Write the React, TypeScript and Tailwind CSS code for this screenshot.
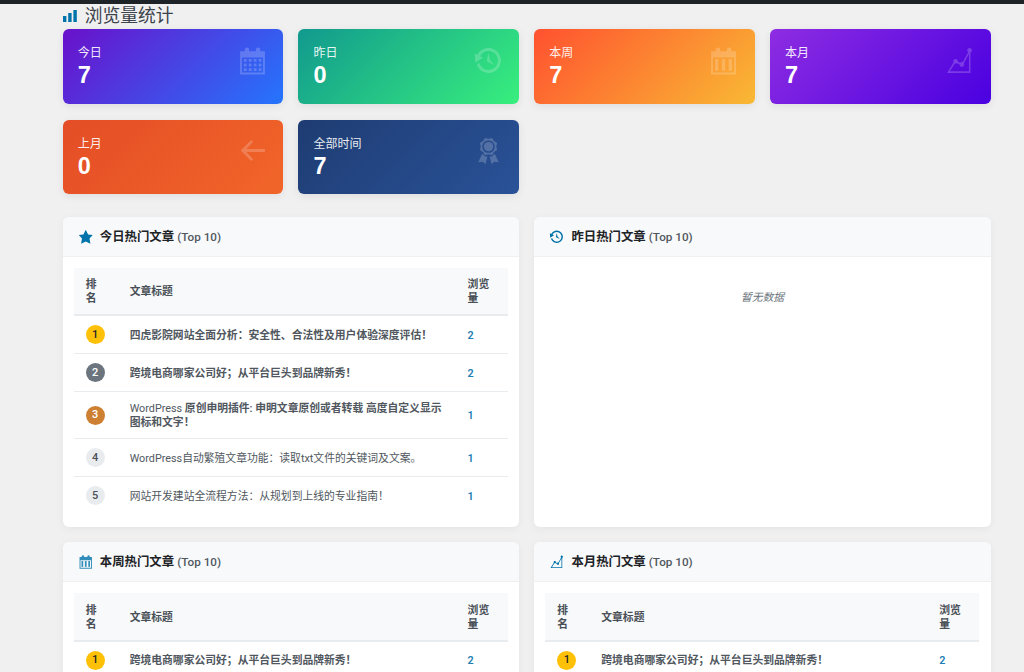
import React from "react";

type IconProps = { className?: string };

const CalFrame = () => (
  <>
    <path fillRule="evenodd" d="M2 4h16v15H2zM3.2 8v9.8h13.6V8z" />
    <rect x="5" y="1.6" width="2.8" height="4.6" rx="1.4" />
    <rect x="12.2" y="1.6" width="2.8" height="4.6" rx="1.4" />
  </>
);

const CalendarAlt = ({ className }: IconProps) => (
  <svg viewBox="0 0 20 20" fill="currentColor" className={className}>
    <CalFrame />
    {[4.4, 7.6, 10.8, 14].map((x) =>
      [9, 12, 15].map((y) => <rect key={`${x}-${y}`} x={x} y={y} width="1.8" height="1.8" />)
    )}
  </svg>
);

const CalendarBars = ({ className }: IconProps) => (
  <svg viewBox="0 0 20 20" fill="currentColor" className={className}>
    <CalFrame />
    <rect x="4.5" y="9" width="2.2" height="7.6" />
    <rect x="8.9" y="9" width="2.2" height="7.6" />
    <rect x="13.3" y="9" width="2.2" height="7.6" />
  </svg>
);

const Backup = ({ className }: IconProps) => (
  <svg viewBox="0 0 20 20" fill="currentColor" className={className}>
    <path d="M13.65 2.88c3.93 2.01 5.48 6.84 3.47 10.77s-6.83 5.48-10.77 3.47c-1.87-.96-3.2-2.56-3.86-4.4l1.64-1.03c.45 1.57 1.52 2.95 3.08 3.76 3.01 1.54 6.69.35 8.23-2.66 1.55-3.01.36-6.69-2.65-8.24C9.78 3.01 6.1 4.2 4.56 7.21l1.88.97-4.95 3.08-.39-5.82 1.78.91C4.9 2.4 9.75.89 13.65 2.88zm-4.36 7.83C9.11 10.53 9 10.28 9 10c0-.07.03-.12.04-.19h-.01L10 5l.97 4.81L14 13l-4.5-2.12.02-.02c-.08-.04-.16-.09-.23-.15z" />
  </svg>
);

const ChartLine = ({ className }: IconProps) => (
  <svg viewBox="0 0 20 20" fill="currentColor" className={className}>
    <path d="M18 3.5c0 .62-.38 1.16-.92 1.38v13.11H1.99l4.22-6.73c-.13-.23-.21-.48-.21-.76C6 9.67 6.67 9 7.5 9S9 9.67 9 10.5c0 .13-.02.25-.05.37l1.44.63c.27-.3.67-.5 1.11-.5.18 0 .35.04.51.09l3.58-6.41c-.36-.27-.59-.7-.59-1.18 0-.83.67-1.5 1.5-1.5.19 0 .36.04.53.1l.05-.09v.11c.54.22.92.76.92 1.38zm-1.92 13.49V5.85l-3.29 5.89c.13.23.21.48.21.76 0 .83-.67 1.5-1.5 1.5s-1.5-.67-1.5-1.5l.01-.07-1.63-.72c-.25.18-.55.29-.88.29-.18 0-.35-.04-.51-.1l-3.2 5.09h12.29z" />
  </svg>
);

const ArrowLeft = ({ className }: IconProps) => (
  <svg viewBox="0 0 20 20" fill="currentColor" className={className}>
    <path d="M18 9.1v1.8H6l4.4 4.7-1.2 1.2L2.4 10l6.8-6.8 1.2 1.2L6 9.1z" />
  </svg>
);

const Awards = ({ className }: IconProps) => (
  <svg viewBox="0 0 20 20" fill="currentColor" className={className}>
    <path d="M4.46 5.16L5 7.46l-.54 2.29 2.01 1.24L7.7 13l2.3-.54 2.3.54 1.23-2.01 2.01-1.24L15 7.46l.54-2.3-2-1.24-1.24-2.01-2.3.55-2.29-.54-1.25 2zm5.55 6.34c-2.21 0-4.01-1.79-4.01-4 0-2.22 1.8-4.01 4.01-4.01 2.22 0 4.01 1.79 4.01 4.01 0 2.21-1.79 4-4.01 4z" />
    <circle cx="10" cy="7.5" r="3" />
    <path d="M5.8 12.4L3.4 17.6l3-.4 1.6 1.6 1.3-5-1.6.1-1.2-1.5zM14.2 12.4l2.4 5.2-3-.4-1.6 1.6-1.3-5 1.6.1 1.2-1.5z" />
  </svg>
);

const Star = ({ className }: IconProps) => (
  <svg viewBox="0 0 20 20" fill="currentColor" className={className}>
    <path d="m10 1 3 6 6 .75-4.12 4.62L16 19l-6-3-6 3 1.13-6.63L1 7.75 7 7z" />
  </svg>
);

const ChartBar = ({ className }: IconProps) => (
  <svg viewBox="0 0 14 12" fill="currentColor" className={className}>
    <rect x="0" y="6" width="3.4" height="6" />
    <rect x="5.2" y="3" width="3.4" height="9" />
    <rect x="10.4" y="0" width="3.4" height="12" />
  </svg>
);

const stats = [
  { label: "今日", value: "7", grad: "bg-[linear-gradient(135deg,#6a11cb,#2575fc)]", Icon: CalendarAlt },
  { label: "昨日", value: "0", grad: "bg-[linear-gradient(135deg,#11998e,#38ef7d)]", Icon: Backup },
  { label: "本周", value: "7", grad: "bg-[linear-gradient(135deg,#ff512f,#f9b934)]", Icon: CalendarBars },
  { label: "本月", value: "7", grad: "bg-[linear-gradient(135deg,#8e2de2,#4a00e0)]", Icon: ChartLine },
  { label: "上月", value: "0", grad: "bg-[linear-gradient(135deg,#e44d26,#f16529)]", Icon: ArrowLeft },
  { label: "全部时间", value: "7", grad: "bg-[linear-gradient(135deg,#1e3c72,#2a5298)]", Icon: Awards },
];

type Row = { title: React.ReactNode; key: string; views: string };

const todayRows: Row[] = [
  { key: "a", title: "四虎影院网站全面分析：安全性、合法性及用户体验深度评估！", views: "2" },
  { key: "b", title: "跨境电商哪家公司好；从平台巨头到品牌新秀！", views: "2" },
  {
    key: "c",
    title: (
      <>
        <span className="font-normal">WordPress</span>
        <span> 原创申明插件: 申明文章原创或者转载 高度自定义显示</span>
        <br />
        <span>图标和文字！</span>
      </>
    ),
    views: "1",
  },
  { key: "d", title: "WordPress自动繁殖文章功能：读取txt文件的关键词及文案。", views: "1" },
  { key: "e", title: "网站开发建站全流程方法：从规划到上线的专业指南！", views: "1" },
];

const weekRows: Row[] = [{ key: "b", title: "跨境电商哪家公司好；从平台巨头到品牌新秀！", views: "2" }];

const rankClass = [
  "bg-[#ffc107] text-[#212529]",
  "bg-[#6c757d] text-white",
  "bg-[#cd7f32] text-white",
  "bg-[#e9ecef] text-[#495057]",
  "bg-[#e9ecef] text-[#495057]",
];

function RankTable({ rows }: { rows: Row[] }) {
  return (
    <table className="w-full table-fixed border-collapse text-[10.8px] leading-[14px]">
      <thead>
        <tr className="border-b-2 border-[#e9ecef] bg-[#f8f9fa] text-left text-[#495057]">
          <th className="w-[44px] px-3 pb-[8px] pt-[10.5px] font-semibold">排名</th>
          <th className="px-3 pb-[8px] pt-[10.5px] font-semibold">文章标题</th>
          <th className="w-[52px] px-3 pb-[8px] pt-[10.5px] font-semibold">浏览量</th>
        </tr>
      </thead>
      <tbody>
        {rows.map(({ title, key, views }, i) => (
          <tr key={key} className="border-b border-[#e9ecef] last:border-b-0">
            <td className="px-3 py-[9px]">
              <span className={`flex h-[19px] w-[19px] items-center justify-center rounded-full text-[11px] font-medium ${rankClass[i]}`}>
                {i + 1}
              </span>
            </td>
            <td className={`px-3 pb-[8px] pt-[10px] text-[#50575e] ${i < 3 ? "font-semibold" : "font-normal"}`}>{title}</td>
            <td className="px-3 pb-[8px] pt-[10px] font-semibold text-[#1f7fb5]">{views}</td>
          </tr>
        ))}
      </tbody>
    </table>
  );
}

function Panel({ title, icon, children }: { title: string; icon: React.ReactNode; children: React.ReactNode }) {
  return (
    <section className="overflow-hidden rounded-[6px] bg-white shadow-[0_2px_8px_rgba(0,0,0,0.05)]">
      <header className="flex h-[40px] items-center gap-[6.6px] border-b border-[#f0f0f1] bg-[#f8f9fa] px-[15px]">
        {icon}
        <h2 className="mt-[2px] text-[12.4px] font-semibold text-[#1d2327]">
          {title} <span className="text-[11.7px] font-medium text-[#50575e]">(Top 10)</span>
        </h2>
      </header>
      {children}
    </section>
  );
}

export default function App() {
  return (
    <div
      className="h-[672px] overflow-hidden bg-[#f0f0f1] text-[#1d2327]"
      style={{ fontFamily: 'Roboto, "Noto Sans CJK SC", sans-serif' }}
    >
      <div className="h-[4px] bg-[#1d2327]" />
      <main className="pl-[62.7px] pr-[33.3px]">
        <h1 className="mb-[2px] flex h-[23px] items-center gap-[8px] text-[17.8px] font-normal leading-[22px] text-[#3c434a]">
          <ChartBar className="h-[12px] w-[14px] text-[#0073aa]" />
          浏览量统计
        </h1>
        <div className="grid grid-cols-4 gap-x-[15.2px] gap-y-[15.8px]">
          {stats.map(({ label, value, grad, Icon }) => (
            <div
              key={label}
              className={`flex h-[74.8px] items-center justify-between rounded-[6px] pl-[15px] pr-[15.5px] text-white shadow-[0_2px_8px_rgba(0,0,0,0.08)] ${grad}`}
            >
              <div>
                <div className="pt-[1px] text-[12px] leading-[16px] opacity-90">{label}</div>
                <div className="mt-[1px] text-[23.5px] font-bold leading-[26px]" style={{ fontFamily: '"Liberation Sans", sans-serif' }}>
                  {value}
                </div>
              </div>
              <Icon className="mt-[15.5px] h-[31px] w-[31px] self-start opacity-20" />
            </div>
          ))}
        </div>
        <div className="mt-[22.5px] grid grid-cols-2 gap-x-[15.2px] gap-y-[15px]">
          <Panel title="今日热门文章" icon={<Star className="h-[15.5px] w-[15.5px] text-[#0073aa]" />}>
            <div className="pb-[12.7px] pl-[11px] pr-[11.5px] pt-[11px]">
              <RankTable rows={todayRows} />
            </div>
          </Panel>
          <Panel title="昨日热门文章" icon={<Backup className="h-[15.5px] w-[15.5px] text-[#0073aa]" />}>
            <p className="pt-[33.5px] text-center text-[10.8px] italic text-[#6c757d]">暂无数据</p>
          </Panel>
          <Panel title="本周热门文章" icon={<CalendarBars className="h-[15.5px] w-[15.5px] text-[#0073aa] opacity-80" />}>
            <div className="pb-[12.7px] pl-[11px] pr-[11.5px] pt-[11px]">
              <RankTable rows={weekRows} />
            </div>
          </Panel>
          <Panel title="本月热门文章" icon={<ChartLine className="h-[15.5px] w-[15.5px] text-[#0073aa]" />}>
            <div className="pb-[12.7px] pl-[11px] pr-[11.5px] pt-[11px]">
              <RankTable rows={weekRows} />
            </div>
          </Panel>
        </div>
      </main>
    </div>
  );
}
